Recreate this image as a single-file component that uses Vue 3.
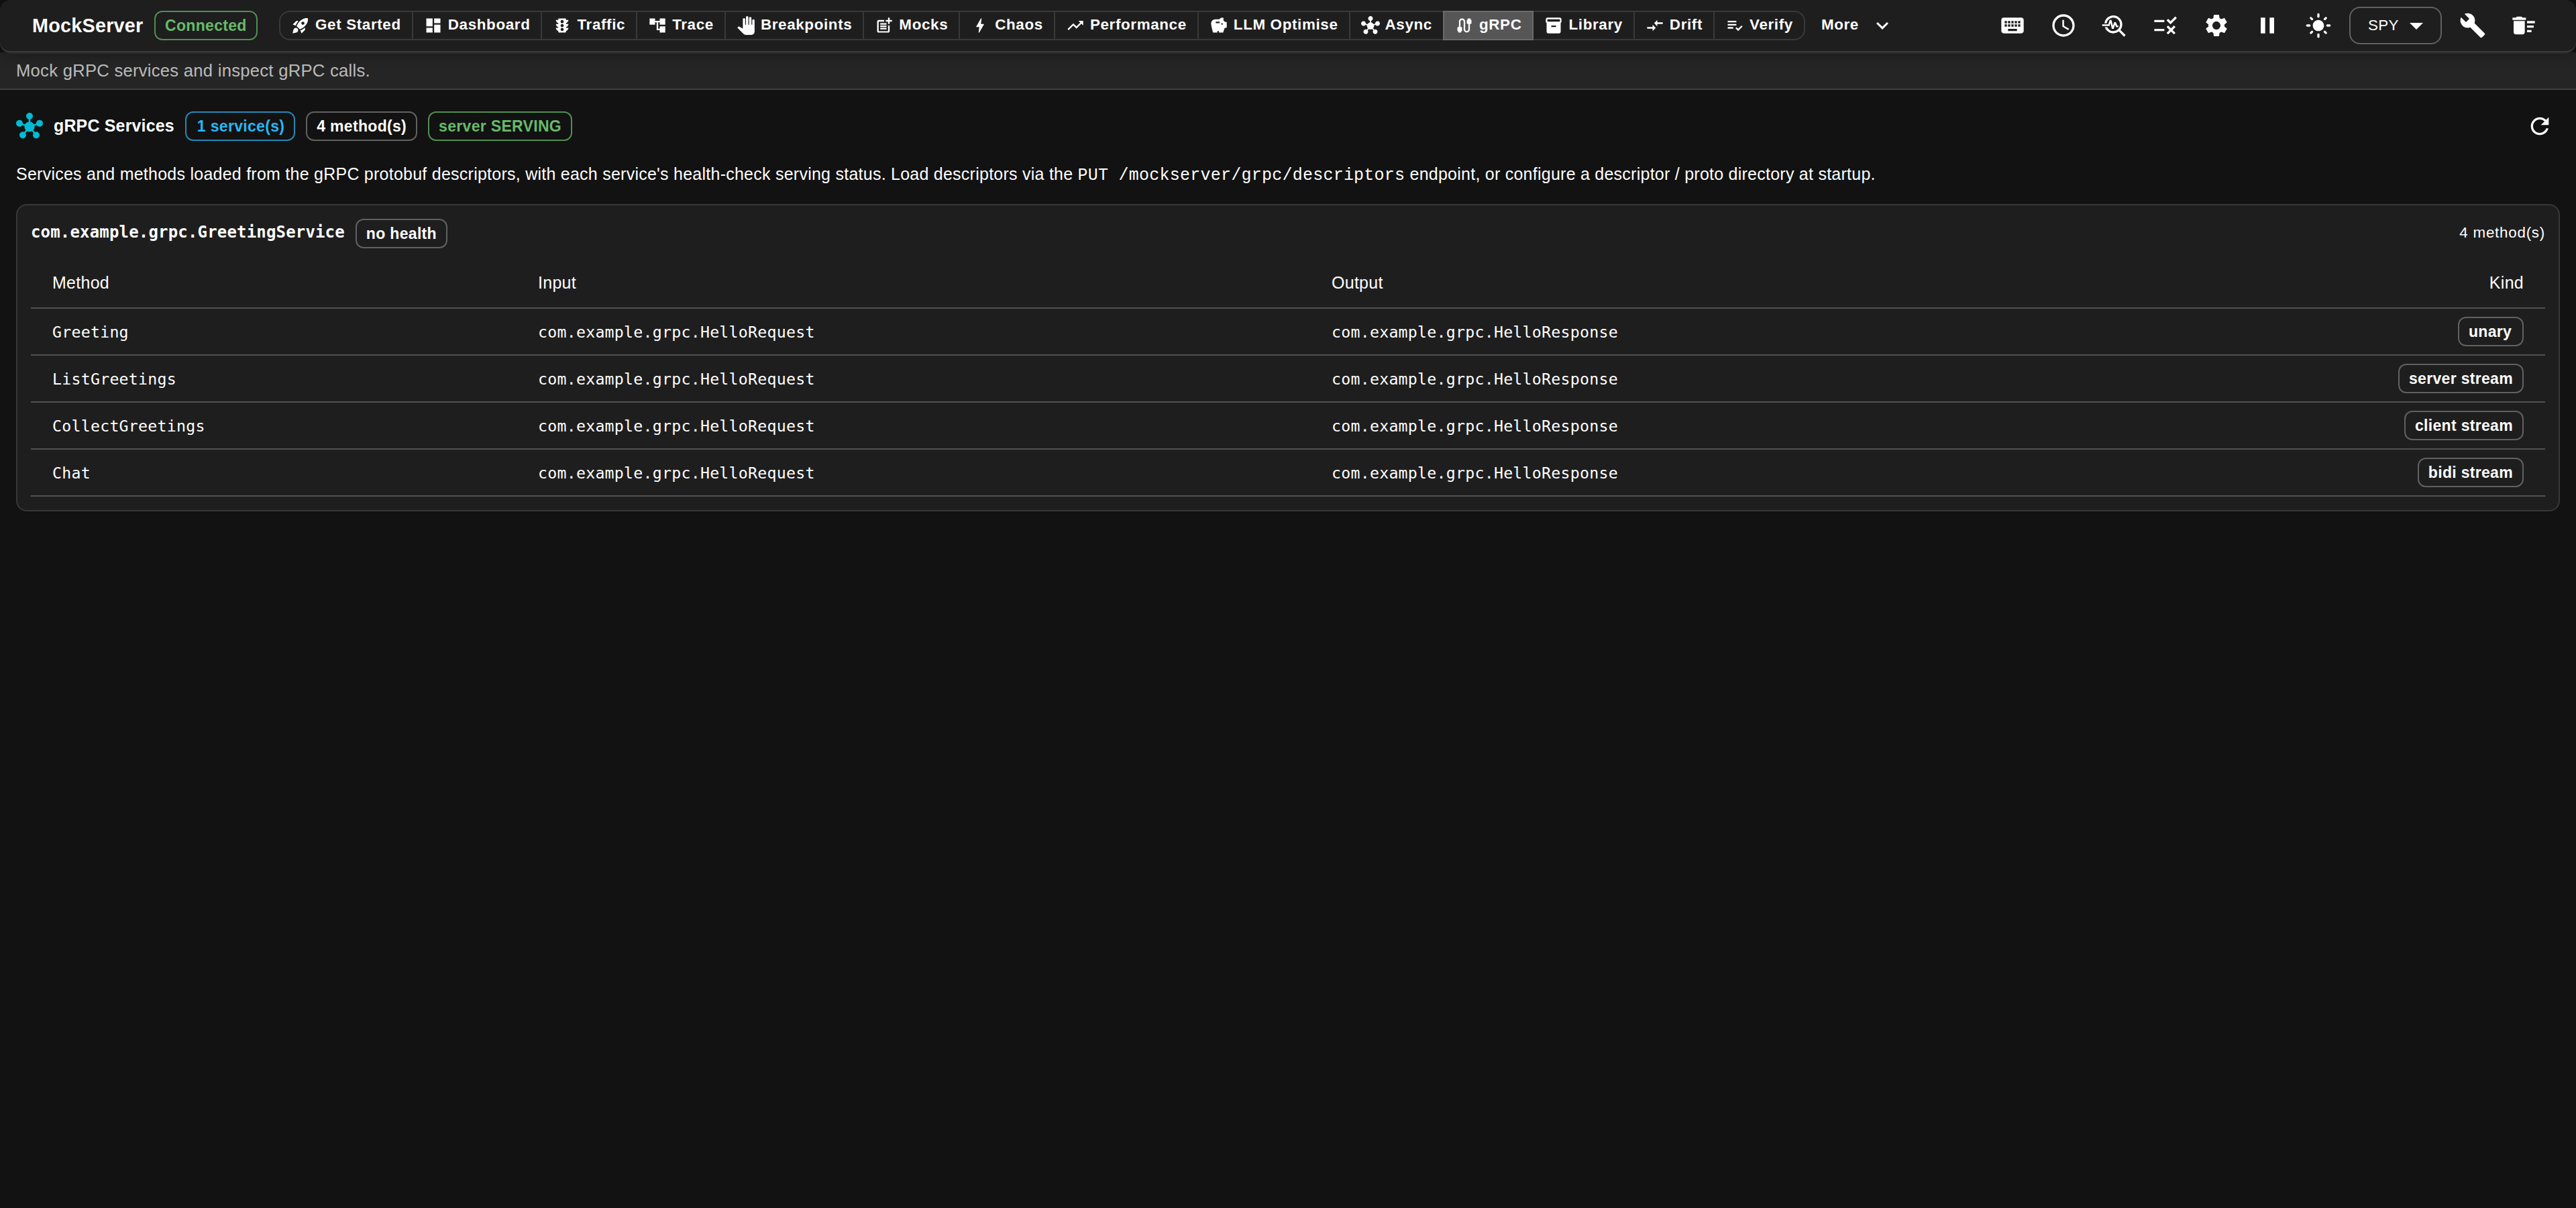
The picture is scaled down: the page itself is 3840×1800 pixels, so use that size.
<script setup>
const tabs = [
  { label: 'Get Started', d: 'M9.19 6.35c-2.04 2.29-3.44 5.58-3.57 5.89L2 10.69l4.05-4.05c.47-.47 1.15-.68 1.81-.55zM11.17 17s3.74-1.55 5.89-3.7c5.4-5.4 4.5-9.62 4.21-10.57-.95-.3-5.17-1.19-10.57 4.21C8.55 9.09 7 12.83 7 12.83zm6.48-2.19c-2.29 2.04-5.58 3.44-5.89 3.57L13.31 22l4.05-4.05c.47-.47.68-1.15.55-1.81zM9 18c0 .83-.34 1.58-.88 2.12C6.94 21.3 2 22 2 22s.7-4.94 1.88-6.12C4.42 15.34 5.17 15 6 15c1.66 0 3 1.34 3 3m4-9c0-1.1.9-2 2-2s2 .9 2 2-.9 2-2 2-2-.9-2-2' },
  { label: 'Dashboard', d: 'M3 13h8V3H3zm0 8h8v-6H3zm10 0h8V11h-8zm0-18v6h8V3z' },
  { label: 'Traffic', d: 'M20 10h-3V8.86c1.72-.45 3-2 3-3.86h-3V4c0-.55-.45-1-1-1H8c-.55 0-1 .45-1 1v1H4c0 1.86 1.28 3.41 3 3.86V10H4c0 1.86 1.28 3.41 3 3.86V15H4c0 1.86 1.28 3.41 3 3.86V20c0 .55.45 1 1 1h8c.55 0 1-.45 1-1v-1.14c1.72-.45 3-2 3-3.86h-3v-1.14c1.72-.45 3-2 3-3.86m-8 9c-1.11 0-2-.9-2-2s.89-2 2-2c1.1 0 2 .9 2 2s-.89 2-2 2m0-5c-1.11 0-2-.9-2-2s.89-2 2-2c1.1 0 2 .9 2 2s-.89 2-2 2m0-5c-1.11 0-2-.9-2-2 0-1.11.89-2 2-2 1.1 0 2 .89 2 2 0 1.1-.89 2-2 2' },
  { label: 'Trace', d: 'M22 11V3h-7v3H9V3H2v8h7V8h2v10h4v3h7v-8h-7v3h-2V8h2v3z' },
  { label: 'Breakpoints', d: 'M23 5.5V20c0 2.2-1.8 4-4 4h-7.3c-1.08 0-2.1-.43-2.85-1.19L1 14.83s1.26-1.23 1.3-1.25c.22-.19.49-.29.79-.29.22 0 .42.06.6.16.04.01 4.31 2.46 4.31 2.46V4c0-.83.67-1.5 1.5-1.5S11 3.17 11 4v7h1V1.5c0-.83.67-1.5 1.5-1.5S15 .67 15 1.5V11h1V2.5c0-.83.67-1.5 1.5-1.5s1.5.67 1.5 1.5V11h1V5.5c0-.83.67-1.5 1.5-1.5s1.5.67 1.5 1.5' },
  { label: 'Mocks', d: 'M17 19.22H5V7h7V5H5c-1.1 0-2 .9-2 2v12c0 1.1.9 2 2 2h12c1.1 0 2-.9 2-2v-7h-2zM19 2h-2v3h-3c.01.01 0 2 0 2h3v2.99c.01.01 2 0 2 0V7h3V5h-3zM7 9h8v2H7zM7 12v2h8v-2h-3zM7 15h8v2H7z' },
  { label: 'Chaos', d: 'M11 21h-1l1-7H7.5c-.58 0-.57-.32-.38-.66.19-.34.05-.08.07-.12C8.48 10.94 10.42 7.54 13 3h1l-1 7h3.5c.49 0 .56.33.47.51l-.07.15C12.96 17.55 11 21 11 21' },
  { label: 'Performance', d: 'm16 6 2.29 2.29-4.88 4.88-4-4L2 16.59 3.41 18l6-6 4 4 6.3-6.29L22 12V6z' },
  { label: 'LLM Optimise', d: 'm19.83 7.5-2.27-2.27c.07-.42.18-.81.32-1.15.11-.26.15-.56.09-.87-.13-.72-.83-1.22-1.57-1.21-1.59.03-3 .81-3.9 2h-5C4.46 4 2 6.46 2 9.5S4.5 21 4.5 21H10v-2h2v2h5.5l1.68-5.59 2.82-.94V7.5zM13 9H8V7h5zm3 2c-.55 0-1-.45-1-1s.45-1 1-1 1 .45 1 1-.45 1-1 1' },
  { label: 'Async', d: 'M8.4 18.2c.38.5.6 1.12.6 1.8 0 1.66-1.34 3-3 3s-3-1.34-3-3 1.34-3 3-3c.44 0 .85.09 1.23.26l1.41-1.77c-.92-1.03-1.29-2.39-1.09-3.69l-2.03-.68c-.54.83-1.46 1.38-2.52 1.38-1.66 0-3-1.34-3-3s1.34-3 3-3 3 1.34 3 3c0 .07 0 .14-.01.21l2.03.68c.64-1.21 1.82-2.09 3.22-2.32V5.91C9.96 5.57 9 4.4 9 3c0-1.66 1.34-3 3-3s3 1.34 3 3c0 1.4-.96 2.57-2.25 2.91v2.16c1.4.23 2.58 1.11 3.22 2.32L18 9.71V9.5c0-1.66 1.34-3 3-3s3 1.34 3 3-1.34 3-3 3c-1.06 0-1.98-.55-2.52-1.37l-2.03.68c.2 1.29-.16 2.65-1.09 3.69l1.41 1.77Q17.34 17 18 17c1.66 0 3 1.34 3 3s-1.34 3-3 3-3-1.34-3-3c0-.68.22-1.3.6-1.8l-1.41-1.77c-1.35.75-3.01.76-4.37 0z' },
  { label: 'gRPC', active: true, d: 'M20 5V4c0-.55-.45-1-1-1h-2c-.55 0-1 .45-1 1v1h-1v4c0 .55.45 1 1 1h1v7c0 1.1-.9 2-2 2s-2-.9-2-2V7c0-2.21-1.79-4-4-4S5 4.79 5 7v7H4c-.55 0-1 .45-1 1v4h1v1c0 .55.45 1 1 1h2c.55 0 1-.45 1-1v-1h1v-4c0-.55-.45-1-1-1H7V7c0-1.1.9-2 2-2s2 .9 2 2v10c0 2.21 1.79 4 4 4s4-1.79 4-4v-7h1c.55 0 1-.45 1-1V5z' },
  { label: 'Library', d: 'M20 2H4c-1 0-2 .9-2 2v3.01c0 .72.43 1.34 1 1.69V20c0 1.1 1.1 2 2 2h14c.9 0 2-.9 2-2V8.7c.57-.35 1-.97 1-1.69V4c0-1.1-1-2-2-2m-5 12H9v-2h6zm5-7H4V4h16z' },
  { label: 'Drift', d: 'M9.01 14H2v2h7.01v3L13 15l-3.99-4zm5.98-1v-3H22V8h-7.01V5L11 9z' },
  { label: 'Verify', d: 'M3 10h11v2H3zm0-4h11v2H3zm0 8h7v2H3zm17.59-2.07-4.25 4.24-2.12-2.12-1.41 1.41L16.34 19 22 13.34z' }
]
const hub = tabs[9].d
const actions = [
  'M20 5H4c-1.1 0-1.99.9-1.99 2L2 17c0 1.1.9 2 2 2h16c1.1 0 2-.9 2-2V7c0-1.1-.9-2-2-2m-9 3h2v2h-2zm0 3h2v2h-2zM8 8h2v2H8zm0 3h2v2H8zm-1 2H5v-2h2zm0-3H5V8h2zm9 7H8v-2h8zm0-4h-2v-2h2zm0-3h-2V8h2zm3 3h-2v-2h2zm0-3h-2V8h2z',
  'M11.99 2C6.47 2 2 6.48 2 12s4.47 10 9.99 10C17.52 22 22 17.52 22 12S17.52 2 11.99 2M12 20c-4.42 0-8-3.58-8-8s3.58-8 8-8 8 3.58 8 8-3.58 8-8 8M12.5 7H11v6l5.25 3.15.75-1.23-4.5-2.67z',
  'm22 20.59-4.69-4.69C18.37 14.55 19 12.85 19 11c0-4.42-3.58-8-8-8-4.08 0-7.44 3.05-7.93 7h2.02C5.57 7.17 8.03 5 11 5c3.31 0 6 2.69 6 6s-2.69 6-6 6c-2.42 0-4.5-1.44-5.45-3.5H3.4C4.45 16.69 7.46 19 11 19c1.85 0 3.55-.63 4.9-1.69L20.59 22zM8.43 9.69 9.65 15h1.64l1.26-3.78.95 2.28h2V12h-1l-1.25-3h-1.54l-1.12 3.37L9.35 7H7.7l-1.25 4H1v1.5h6.55z',
  'M16.54 11 13 7.46l1.41-1.41 2.12 2.12 4.24-4.24 1.41 1.41zM11 7H2v2h9zm10 6.41L19.59 12 17 14.59 14.41 12 13 13.41 15.59 16 13 18.59 14.41 20 17 17.41 19.59 20 21 18.59 18.41 16zM11 15H2v2h9z',
  'M19.14 12.94c.04-.3.06-.61.06-.94 0-.32-.02-.64-.07-.94l2.03-1.58c.18-.14.23-.41.12-.61l-1.92-3.32c-.12-.22-.37-.29-.59-.22l-2.39.96c-.5-.38-1.03-.7-1.62-.94l-.36-2.54c-.04-.24-.24-.41-.48-.41h-3.84c-.24 0-.43.17-.47.41l-.36 2.54c-.59.24-1.13.57-1.62.94l-2.39-.96c-.22-.08-.47 0-.59.22L2.74 8.87c-.12.21-.08.47.12.61l2.03 1.58c-.05.3-.09.63-.09.94s.02.64.07.94l-2.03 1.58c-.18.14-.23.41-.12.61l1.92 3.32c.12.22.37.29.59.22l2.39-.96c.5.38 1.03.7 1.62.94l.36 2.54c.05.24.24.41.48.41h3.84c.24 0 .44-.17.47-.41l.36-2.54c.59-.24 1.13-.56 1.62-.94l2.39.96c.22.08.47 0 .59-.22l1.92-3.32c.12-.22.07-.47-.12-.61zM12 15.6c-1.98 0-3.6-1.62-3.6-3.6s1.62-3.6 3.6-3.6 3.6 1.62 3.6 3.6-1.62 3.6-3.6 3.6',
  'M6 19h4V5H6zm8-14v14h4V5z',
  'M12 7c-2.76 0-5 2.24-5 5s2.24 5 5 5 5-2.24 5-5-2.24-5-5-5M2 13h2c.55 0 1-.45 1-1s-.45-1-1-1H2c-.55 0-1 .45-1 1s.45 1 1 1m18 0h2c.55 0 1-.45 1-1s-.45-1-1-1h-2c-.55 0-1 .45-1 1s.45 1 1 1M11 2v2c0 .55.45 1 1 1s1-.45 1-1V2c0-.55-.45-1-1-1s-1 .45-1 1m0 18v2c0 .55.45 1 1 1s1-.45 1-1v-2c0-.55-.45-1-1-1s-1 .45-1 1M5.99 4.58c-.39-.39-1.03-.39-1.41 0-.39.39-.39 1.03 0 1.41l1.06 1.06c.39.39 1.03.39 1.41 0s.39-1.03 0-1.41zm12.37 12.37c-.39-.39-1.03-.39-1.41 0-.39.39-.39 1.03 0 1.41l1.06 1.06c.39.39 1.03.39 1.41 0 .39-.39.39-1.03 0-1.41zm1.06-10.96c.39-.39.39-1.03 0-1.41-.39-.39-1.03-.39-1.41 0l-1.06 1.06c-.39.39-.39 1.03 0 1.41s1.03.39 1.41 0zM7.05 18.36c.39-.39.39-1.03 0-1.41-.39-.39-1.03-.39-1.41 0l-1.06 1.06c-.39.39-.39 1.03 0 1.41s1.03.39 1.41 0z'
]
const tools = [
  'm22.7 19-9.1-9.1c.9-2.3.4-5-1.5-6.9-2-2-5-2.4-7.4-1.3L9 6 6 9 1.6 4.7C.4 7.1.9 10.1 2.9 12.1c1.9 1.9 4.6 2.4 6.9 1.5l9.1 9.1c.4.4 1 .4 1.4 0l2.3-2.3c.5-.4.5-1.1.1-1.4',
  'M15 16h4v2h-4zm0-8h7v2h-7zm0 4h6v2h-6zM3 18c0 1.1.9 2 2 2h6c1.1 0 2-.9 2-2V8H3zM14 5h-3l-1-1H6L5 5H2v2h12z'
]
const methods = [
  { name: 'Greeting', kind: 'unary' },
  { name: 'ListGreetings', kind: 'server stream' },
  { name: 'CollectGreetings', kind: 'client stream' },
  { name: 'Chat', kind: 'bidi stream' }
]
</script>

<template>
  <div class="page">
    <header class="appbar">
      <h1 class="brand">MockServer</h1>
      <span class="chip green">Connected</span>
      <nav class="tabs">
        <button v-for="t in tabs" :key="t.label" class="tab" :class="{ active: t.active }">
          <svg class="i28" viewBox="0 0 24 24"><path :d="t.d" /></svg>
          <span>{{ t.label }}</span>
        </button>
      </nav>
      <button class="more">
        <span>More</span>
        <svg class="i36" viewBox="0 0 24 24"><path d="M16.59 8.59 12 13.17 7.41 8.59 6 10l6 6 6-6z" /></svg>
      </button>
      <div class="actions">
        <button v-for="(d, i) in actions" :key="i" class="icon-btn"><svg class="i40" viewBox="0 0 24 24"><path :d="d" /></svg></button>
        <div class="select">
          <span>SPY</span>
          <svg class="i48" viewBox="0 0 24 24"><path d="m7 10 5 5 5-5z" /></svg>
        </div>
        <button v-for="(d, i) in tools" :key="'t' + i" class="icon-btn"><svg class="i40" viewBox="0 0 24 24"><path :d="d" /></svg></button>
      </div>
    </header>

    <div class="subbar">Mock gRPC services and inspect gRPC calls.</div>

    <main class="content">
      <div class="heading">
        <svg class="i40 hub" viewBox="0 0 24 24"><path :d="hub" /></svg>
        <h2 class="title">gRPC Services</h2>
        <span class="chip blue">1 service(s)</span>
        <span class="chip">4 method(s)</span>
        <span class="chip green">server SERVING</span>
        <button class="icon-btn refresh">
          <svg class="i40" viewBox="0 0 24 24"><path d="M17.65 6.35C16.2 4.9 14.21 4 12 4c-4.42 0-7.99 3.58-7.99 8s3.57 8 7.99 8c3.73 0 6.84-2.55 7.73-6h-2.08c-.82 2.33-3.04 4-5.65 4-3.31 0-6-2.69-6-6s2.69-6 6-6c1.66 0 3.14.69 4.22 1.78L13 11h7V4z" /></svg>
        </button>
      </div>

      <p class="desc">Services and methods loaded from the gRPC protobuf descriptors, with each service's health-check serving status. Load descriptors via the <code>PUT /mockserver/grpc/descriptors</code> endpoint, or configure a descriptor / proto directory at startup.</p>

      <section class="card">
        <div class="card-head">
          <span class="service">com.example.grpc.GreetingService</span>
          <span class="chip">no health</span>
          <span class="count">4 method(s)</span>
        </div>
        <table class="table">
          <thead>
            <tr><th class="c1">Method</th><th class="c2">Input</th><th>Output</th><th class="right">Kind</th></tr>
          </thead>
          <tbody>
            <tr v-for="m in methods" :key="m.name">
              <td>{{ m.name }}</td>
              <td>com.example.grpc.HelloRequest</td>
              <td>com.example.grpc.HelloResponse</td>
              <td class="right"><span class="chip">{{ m.kind }}</span></td>
            </tr>
          </tbody>
        </table>
      </section>
    </main>
  </div>
</template>

<style>
body { background: #121212; }
</style>

<style scoped>
.page {
  min-height: 1800px;
  background: #121212;
  color: #fff;
  font-family: "Liberation Sans", Arial, sans-serif;
  letter-spacing: 0.3px;
}
.page * { box-sizing: border-box; }
h1, h2, p { margin: 0; }
button {
  margin: 0;
  padding: 0;
  border: 0;
  background: none;
  color: inherit;
  font-family: inherit;
}
svg { display: block; flex: none; fill: currentColor; }
.i28 { width: 28px; height: 28px; }
.i36 { width: 36px; height: 36px; }
.i40 { width: 40px; height: 40px; }
.i48 { width: 48px; height: 48px; }

.appbar {
  position: relative;
  z-index: 1;
  display: flex;
  align-items: center;
  height: 78px;
  padding: 0 48px;
  background: #1e1e1e;
  border-bottom: 2px solid #3a3a3a;
  border-radius: 16px;
  box-shadow: 0 2px 0 #2b2b2b, 0 8px 16px rgba(0, 0, 0, 0.2);
}
.brand {
  margin-right: 16.6px;
  font-size: 28.8px;
  font-weight: 700;
  line-height: 46px;
  letter-spacing: 0.0075em;
}
.chip {
  display: inline-flex;
  align-items: center;
  flex: none;
  height: 44px;
  min-width: 98px;
  padding: 0 14px;
  border: 2px solid #616161;
  border-radius: 12px;
  font-family: "Liberation Sans", Arial, sans-serif;
  font-size: 23.04px;
  font-weight: 700;
  line-height: 34px;
  letter-spacing: 0.3px;
  white-space: nowrap;
}
.chip.green { color: #66bb6a; border-color: #4f8f52; }
.chip.blue { padding-left: 16px; color: #29b6f6; border-color: #2388b5; }

.tabs { display: flex; margin-left: 32.3px; }
.tab {
  display: flex;
  align-items: center;
  gap: 8px;
  height: 44px;
  padding: 0 16px;
  border: 2px solid #393939;
  font-size: 22.4px;
  font-weight: 700;
  letter-spacing: 0.02857em;
  white-space: nowrap;
}
.tab span { padding-bottom: 3px; }
.tab + .tab { margin-left: -2px; }
.tab:first-child { border-radius: 16px 0 0 16px; }
.tab:last-child { border-radius: 0 16px 16px 0; }
.tab.active { background: #565656; border-color: #6b6b6b; position: relative; }
.more {
  display: flex;
  align-items: center;
  gap: 17px;
  margin-left: 24px;
  font-size: 22.4px;
  font-weight: 700;
  letter-spacing: 0.02857em;
}
.more span { padding-bottom: 3px; }
.actions { display: flex; align-items: center; gap: 16px; margin-left: auto; }
.icon-btn { display: flex; align-items: center; justify-content: center; width: 60px; height: 60px; }
.select {
  display: flex;
  align-items: center;
  justify-content: space-between;
  width: 138px;
  height: 56px;
  padding: 0 12px 0 26px;
  border: 2px solid #616161;
  border-radius: 16px;
  font-size: 22.4px;
}

.subbar {
  height: 56px;
  padding: 0 24px;
  background: #252525;
  border-bottom: 2px solid #404040;
  color: rgba(255, 255, 255, 0.7);
  font-size: 25.6px;
  line-height: 55px;
  letter-spacing: 0.01071em;
}

.content { padding: 24px; }
.heading { display: flex; align-items: center; gap: 16px; height: 60px; }
.hub { color: #00bcd4; }
.title { padding-bottom: 2px; font-size: 24.96px; font-weight: 700; letter-spacing: 0.00714em; }
.refresh { margin-left: auto; }
.desc {
  height: 38px;
  margin: 24px 0;
  font-size: 24.96px;
  line-height: 34px;
  letter-spacing: 0.01071em;
}
.desc code { font-family: "Courier New", "Liberation Mono", monospace; font-size: 24.96px; line-height: 1; }

.card {
  padding: 20px;
  background: #1e1e1e;
  border: 2px solid #383838;
  border-radius: 16px;
}
.card-head { display: flex; align-items: center; gap: 16px; height: 44px; margin-bottom: 16px; }
.service {
  padding-bottom: 4px;
  font-family: "DejaVu Sans Mono", monospace;
  font-size: 24px;
  font-weight: 700;
  letter-spacing: 0.00714em;
}
.count { margin-left: auto; padding-bottom: 3px; font-size: 22.4px; letter-spacing: 0.03333em; }
.table { width: 100%; border-collapse: separate; border-spacing: 0; table-layout: fixed; }
.c1 { width: 724px; }
.c2 { width: 1183px; }
th {
  padding: 11px 32px 13px;
  border-bottom: 2px solid #515151;
  font-size: 24.96px;
  font-weight: 400;
  line-height: 48px;
  text-align: left;
}
td {
  height: 70px;
  padding: 0 32px;
  border-bottom: 2px solid #515151;
  font-family: "DejaVu Sans Mono", monospace;
  font-size: 23.2px;
  letter-spacing: 0.27px;
  vertical-align: middle;
}
.right { text-align: right; }
td .chip { vertical-align: middle; }
</style>
